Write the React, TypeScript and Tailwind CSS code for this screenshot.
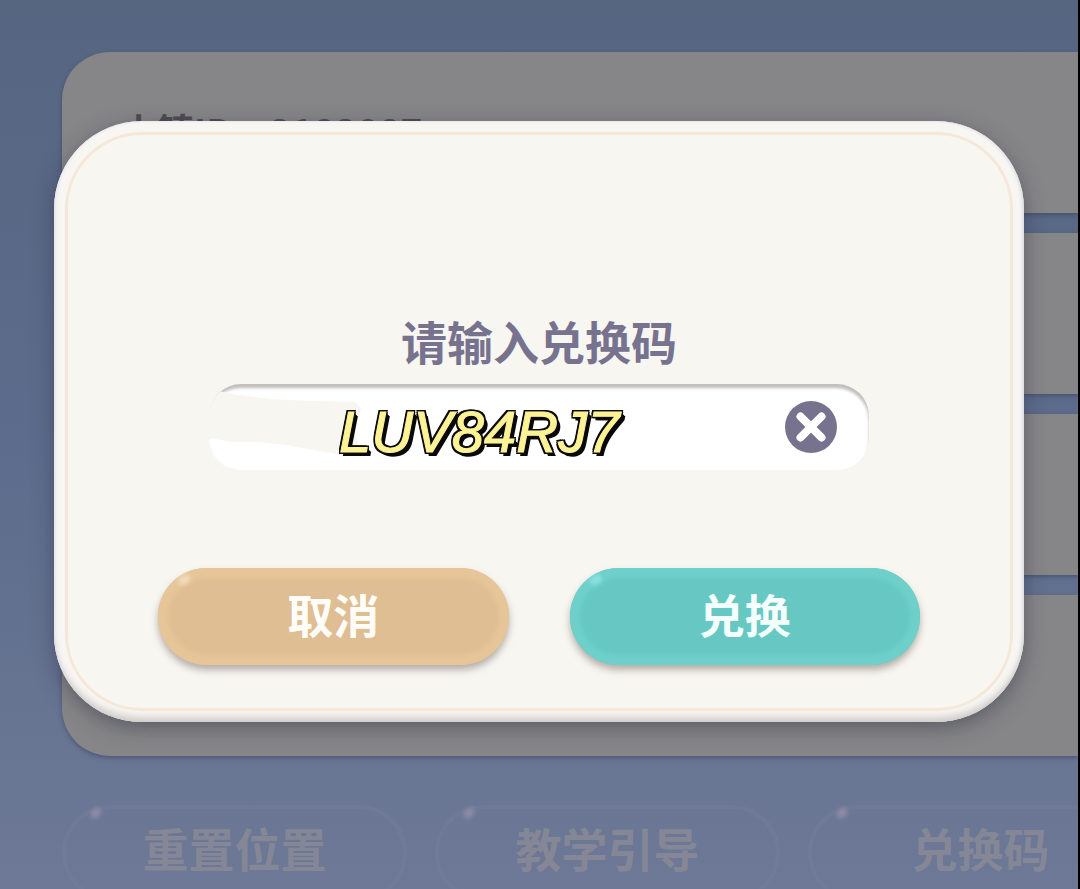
import { useState } from "react";

const settingRows = ["小镇ID：2183087", "", "", ""];
const footerActions = ["重置位置", "教学引导", "兑换码"];

function SettingsPage() {
  return (
    <div className="absolute inset-0 overflow-hidden bg-linear-to-b from-[#566580] via-[#5d6c8c] to-[#6d7996] pt-[52px] pl-[62px]">
      <div className="flex flex-col gap-5">
        {settingRows.map((row, i) => (
          <div
            key={i}
            className="h-[161px] bg-[#868688] px-[58px] pt-[54px] text-[37px] leading-[48px] font-bold text-[#4c4c50] shadow-[0_2px_4px_rgba(50,60,90,0.5)] first:rounded-tl-[48px] last:rounded-bl-[48px]"
          >
            {row}
          </div>
        ))}
      </div>
      <div className="mt-[49px] flex gap-7">
        {footerActions.map((label) => (
          <button
            key={label}
            type="button"
            className="relative h-24 w-[345px] shrink-0 rounded-full border-4 border-[#76809c]/40 pb-3 text-[46px] leading-[60px] font-bold text-[#858796]"
          >
            <span className="absolute top-0 left-6 h-2 w-3 -rotate-45 rounded-full bg-[#8f8ba6] blur-[2px]" />
            {label}
          </button>
        ))}
      </div>
    </div>
  );
}

function CodeField() {
  const [code, setCode] = useState("LUV84RJ7");

  return (
    <div className="flex flex-col">
      <label
        htmlFor="code"
        className="text-center text-[46px] leading-[60px] font-bold text-[#77738f]"
      >
        请输入兑换码
      </label>
      <div className="relative mx-[51px] mt-[14px] flex h-[86px] items-center overflow-hidden rounded-[32px] bg-white pr-8 pl-32 shadow-[inset_-1px_5px_3px_-1px_#c0bfbd]">
        <svg
          className="pointer-events-none absolute top-0 left-0 h-[86px] w-[160px]"
          viewBox="0 0 160 86"
          fill="#f7f6f1"
        >
          <path d="M0 0H26C20 2 14 4 9 7L30 11L62 15L100 17L146 18L152 24L146 46L150 64L128 70L104 66L78 61L50 58L22 58L2 54L0 56Z" />
        </svg>
        <input
          id="code"
          value={code}
          onChange={(e) => setCode(e.target.value)}
          className="relative h-full min-w-0 flex-1 bg-transparent pt-2 pl-[2px] font-['Liberation_Sans',sans-serif] text-[58px] text-[#fdf296] italic outline-none [-webkit-text-stroke:1px_#fdf296] [text-shadow:-2px_-2px_0_#0a0a0a,2px_-2px_0_#0a0a0a,-2px_2px_0_#0a0a0a,-2px_0_0_#0a0a0a,0_-2px_0_#0a0a0a,2px_0_0_#0a0a0a,0_2px_0_#0a0a0a,2px_2px_0_#0a0a0a,3px_3px_0_#0a0a0a,4px_4px_0_#0a0a0a,2px_4px_0_#0a0a0a]"
        />
        <button
          type="button"
          aria-label="清除"
          onClick={() => setCode("")}
          className="size-[52px] shrink-0 rounded-full bg-[#77738f]"
        >
          <svg viewBox="0 0 52 52" fill="none" stroke="#fff" strokeWidth="8" strokeLinecap="round">
            <path d="M15.500 15.500L36.500 36.500M36.500 15.500L15.500 36.500" />
          </svg>
        </button>
      </div>
    </div>
  );
}

export default function App() {
  return (
    <div className="relative min-h-screen overflow-hidden border-r-2 border-black font-['Noto_Sans_CJK_SC',sans-serif]">
      <SettingsPage />
      <div className="relative px-[54px] pt-[121px]">
        <div
          role="dialog"
          className="rounded-[88px] bg-[#f8f6f3] p-[11px] shadow-[0_6px_20px_rgba(50,50,70,0.5),inset_0_-8px_7px_-3px_#d0cecb,inset_-2px_0_3px_#e2e1e6,inset_2px_0_3px_#edecf0]"
        >
          <div className="rounded-[77px] border-[3px] border-[#f6e8d9] bg-[#f7f6f1] px-[90px] pt-[175px] pb-[43px]">
            <CodeField />
            <div className="mt-[98px] flex gap-[61px] text-[46px] leading-[60px] font-bold">
              <button
                type="button"
                className="relative h-[97px] flex-1 rounded-full bg-[#dfbe94] pb-2 text-[#fffdf8] shadow-[0_5px_7px_rgba(120,105,100,0.5),inset_0_0_4px_10px_#e6c698]"
              >
                <span className="absolute top-2 left-5 h-2 w-3 -rotate-30 rounded-full bg-[#f3dcbd] blur-[2px]" />
                取消
              </button>
              <button
                type="button"
                className="relative h-[97px] flex-1 rounded-full bg-[#67c8c3] pb-2 text-[#f4fffe] shadow-[0_5px_7px_rgba(120,105,100,0.5),inset_0_0_4px_10px_#6fd0ca]"
              >
                <span className="absolute top-2 left-5 h-2 w-3 -rotate-30 rounded-full bg-[#8fe2e2] blur-[2px]" />
                兑换
              </button>
            </div>
          </div>
        </div>
      </div>
    </div>
  );
}
